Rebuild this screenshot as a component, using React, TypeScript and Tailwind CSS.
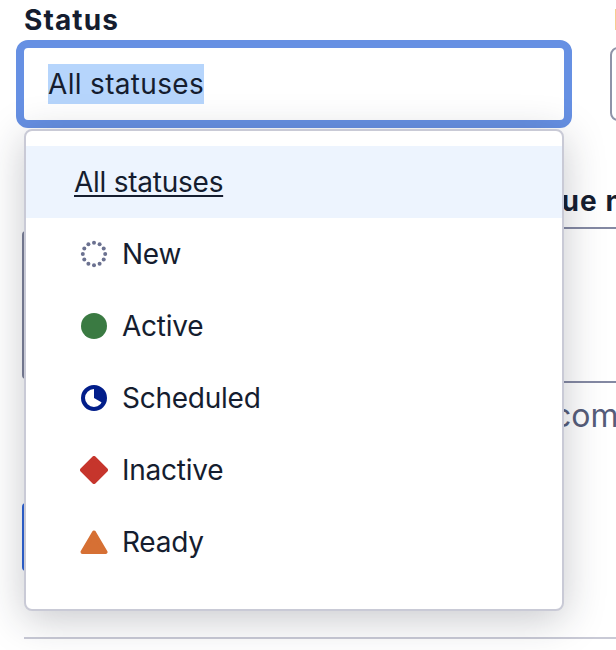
const font = { fontFamily: "Inter, sans-serif" }

function NewIcon() {
  const dots = Array.from({ length: 12 }, (_, i) => (i * Math.PI) / 6)
  return (
    <svg width="28" height="28" viewBox="0 0 28 28">
      {dots.map((a, i) => (
        <circle key={i} cx={14 + 11.2 * Math.sin(a)} cy={14 - 11.2 * Math.cos(a)} r="2" fill="#6b7190" />
      ))}
    </svg>
  )
}

function ActiveIcon() {
  return (
    <svg width="28" height="28" viewBox="0 0 28 28">
      <circle cx="14" cy="14" r="13" fill="#3a7a42" />
    </svg>
  )
}

function ScheduledIcon() {
  return (
    <svg width="28" height="28" viewBox="0 0 28 28">
      <circle cx="14" cy="14" r="11" fill="#fff" stroke="#021e8a" strokeWidth="4" />
      <path d="M14 14 V3 A11 11 0 0 1 23.5 19.5 Z" fill="#021e8a" />
    </svg>
  )
}

function InactiveIcon() {
  return (
    <svg width="28" height="28" viewBox="0 0 28 28">
      <path d="M14 2 L26 14 L14 26 L2 14 Z" fill="#c6352c" stroke="#c6352c" strokeWidth="4" strokeLinejoin="round" />
    </svg>
  )
}

function ReadyIcon() {
  return (
    <svg width="28" height="28" viewBox="0 0 28 28">
      <path d="M14 4.5 L25.5 24 H2.5 Z" fill="#d67034" stroke="#d67034" strokeWidth="4" strokeLinejoin="round" />
    </svg>
  )
}

const items = [
  { label: "New", icon: <NewIcon /> },
  { label: "Active", icon: <ActiveIcon /> },
  { label: "Scheduled", icon: <ScheduledIcon /> },
  { label: "Inactive", icon: <InactiveIcon /> },
  { label: "Ready", icon: <ReadyIcon /> },
]

export default function App() {
  return (
    <div style={font} className="relative h-[650px] w-[616px] overflow-hidden bg-white pl-6 text-[#151d2f]">
      <div className="flex w-[800px] gap-[46px] pt-[4px]">
        <div className="w-[540px] shrink-0">
          <div className="h-[36px] text-[28px] font-bold leading-[32px] tracking-[1.1px]">Status</div>
          <div className="mt-2 flex h-[72px] items-center rounded-[4px] bg-white pl-6 outline-8 outline-[#6690e3]">
            <span className="bg-[#b6d5fc] text-[28px] leading-[40px] tracking-[0.33px]">All statuses</span>
          </div>
        </div>
        <div className="w-[200px] shrink-0">
          <div className="h-[36px] pl-1 text-[28px] font-bold leading-[32px] tracking-[1.1px]">Issue</div>
          <div className="mt-[7px] h-[74px] rounded-[8px] border-2 border-[#8f94a9]"></div>
        </div>
      </div>

      <div className="mt-[110px] flex">
        <div className="h-[148px] w-[540px] shrink-0 -translate-x-[2px] rounded-l-[4px] border-l-2 border-[#7d8199]"></div>
        <div className="-mt-[44px] w-[120px] shrink-0">
          <div className="h-[42px] whitespace-nowrap border-b-2 border-[#8489a3]">
            <div className="-ml-[45px] text-[28px] font-bold leading-[28px] tracking-[1.1px]">Issue name</div>
          </div>
          <div className="h-[154px] border-b-2 border-[#8489a3]"></div>
          <div className="-ml-[11px] whitespace-nowrap pt-[13px] text-[32px] leading-[40px] text-[#565d7a]">comments</div>
        </div>
      </div>

      <div className="mt-[67px] h-[68px] w-[40px] -translate-x-[2px] rounded-l-[4px] border-l-2 border-[#2d63d8]"></div>
      <div className="mt-[66px] h-[2px] w-[592px] bg-[#c9cad6]"></div>

      <div className="absolute left-6 top-[129px] h-[482px] w-[540px] rounded-[8px] border-2 border-[#c9cad6] bg-white pt-[15px] shadow-[0_8px_40px_rgba(30,35,50,0.25)]">
        <div className="flex h-[72px] items-center bg-[#edf4fe] pl-[48px] text-[28px] tracking-[-0.25px] underline decoration-2 underline-offset-[3px]">
          All statuses
        </div>
        {items.map((item) => (
          <div key={item.label} className="flex h-[72px] items-center gap-[14px] pl-[54px] text-[28px] tracking-[-0.25px]">
            {item.icon}
            <span>{item.label}</span>
          </div>
        ))}
      </div>
    </div>
  )
}
